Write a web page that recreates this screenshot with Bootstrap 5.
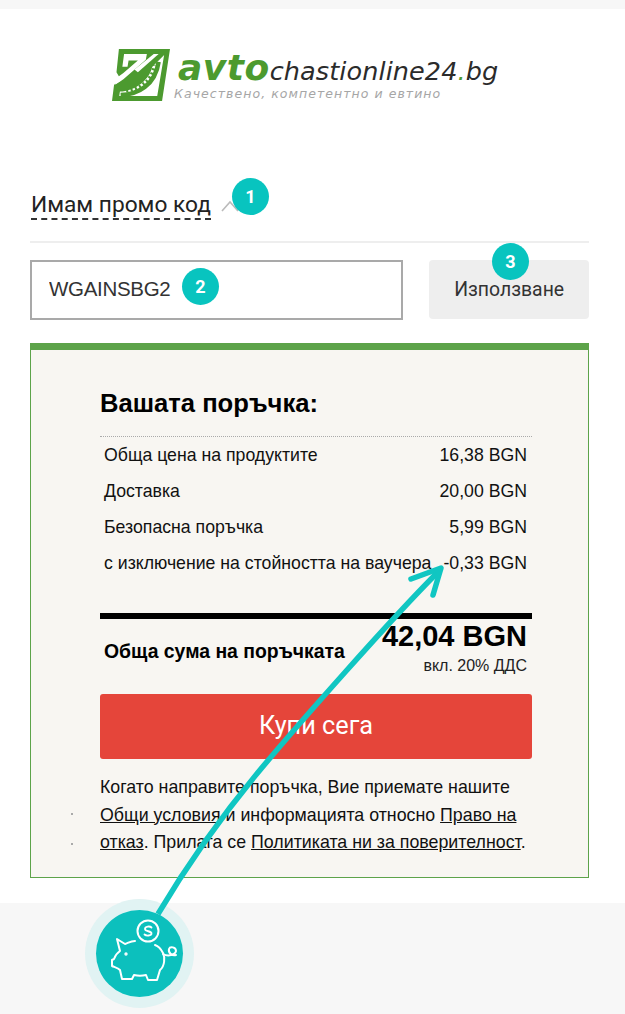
<!DOCTYPE html>
<html lang="bg">
<head>
<meta charset="utf-8">
<title>Вашата поръчка</title>
<link href="https://cdn.jsdelivr.net/npm/bootstrap@5.3.0/dist/css/bootstrap.min.css" rel="stylesheet">
<style>
html,body{margin:0;padding:0;background:#fff}
body{width:625px;height:1014px;overflow:hidden;position:relative;font-family:"Liberation Sans",Arial,sans-serif;color:#111}
.top-strip{height:9px;background:#f7f7f7}
.main-area{height:894px;padding:0 36px 0 30px}
.logo-row{height:104px;padding:40px 0 0 82px;gap:8px}
.logo-text{width:340px;padding-top:1px}
.logo-name{font-family:"DejaVu Sans",sans-serif;font-style:italic;line-height:36px;white-space:nowrap}
.logo-avto{font-size:36px;font-weight:700;color:#4c9a2f;letter-spacing:.5px}
.logo-rest{font-size:25.5px;color:#2b2b2b;letter-spacing:.1px}
.logo-dot{font-size:25.5px;color:#4c9a2f}
.logo-tag{font-family:"DejaVu Sans",sans-serif;font-size:12.5px;font-style:italic;color:#a6a6a6;letter-spacing:1.05px;margin-top:-6px;line-height:14px;white-space:nowrap;margin-left:-4px}
.promo-row{height:130px;padding-top:78px;border-bottom:2px solid #eee}
.promo-link{font-family:"Roboto",sans-serif;font-size:22.7px;line-height:27px;color:#222;border-bottom:2px dashed #333;display:inline-block;height:29px;margin-left:1px}
.promo-caret{display:inline-block;margin-left:6px;vertical-align:0}
.code-row{margin-top:17px;gap:26px}
.code-input{width:374px;height:60px;border:2px solid #a9a9a9;border-radius:0;font-size:20.5px;color:#333;padding:0 17px 3px;font-family:"Liberation Sans",sans-serif;box-shadow:none;letter-spacing:-.3px}
.use-btn{width:160px;height:59px;background:#eee;border:0;border-radius:4px;color:#333;font-family:"Roboto",sans-serif;font-size:19.4px;padding:0}
.order-box{margin-top:23px;height:535px;border:1px solid #5da34a;border-top:7px solid #5da34a;background:#f8f6f2;padding:37px 56px 0 69px}
.order-title{font-size:25.6px;font-weight:700;line-height:32px;color:#000;margin:0 0 17px}
.order-lines{border-top:1px dotted #aaa;padding:0 5px 0 4px;height:177px}
.order-line{height:36px;font-size:17.7px;align-items:center;color:#111}
.total-wrap{border-top:6px solid #000;height:81px;padding:0 5px 0 4px}
.total-label{font-size:19.4px;font-weight:700;padding-top:20px;line-height:24px;white-space:nowrap;color:#000}
.total-num{font-size:29px;font-weight:700;line-height:30px;padding-top:2px;text-align:right;white-space:nowrap;color:#000}
.total-vat{font-size:16px;line-height:18px;margin-top:6px;text-align:right;color:#222}
.buy-btn{display:block;width:100%;height:65px;background:#e5453a;border:0;border-radius:3px;color:#fff;font-family:"Roboto",sans-serif;font-size:25.3px;padding:0 0 2px}
.legal{font-size:17.8px;line-height:27.5px;margin:15px -10px 0 0;white-space:nowrap;color:#111}
.legal a{color:#111;text-decoration:underline}
.bottom-band{height:111px;background:#f7f7f7}
.num-badge{position:absolute;width:37px;height:37px;border-radius:50%;background:#08c4bf;color:#fff;font-family:"Roboto",sans-serif;font-weight:700;font-size:18px;line-height:37px;text-align:center}
.badge-one{left:232px;top:178px}
.badge-two{left:182px;top:268px}
.badge-three{left:492px;top:243px}
.arrow-layer{position:absolute;left:0;top:0;pointer-events:none}
.pig-halo{position:absolute;left:85px;top:899px;width:109px;height:109px;border-radius:50%;background:#e1f3f3}
.pig-disc{position:absolute;left:96px;top:910px;width:87px;height:87px;border-radius:50%;background:#0cc0bd}
.stray-dot{position:absolute;left:71px;width:2px;height:2px;background:#aaa}
</style>
</head>
<body>
<div class="top-strip"></div>
<div class="main-area">
  <div class="logo-row d-flex align-items-start">
    <svg width="58" height="52" viewBox="25 25 168 150" class="flex-shrink-0">
      <path fill="#4c9a2f" d="M45 25H193L170 175H25L31 128 52 116 38 92Z"/>
      <path fill="#fff" d="M60 39H126L123 56 58 112 34 128 44 104 58 94 100 58H73L70 76H55Z"/>
      <path fill="#fff" d="M176 42 156 161H46L48 148C90 146 130 120 142 76Z"/>
      <path fill="#fff" d="M146 39H160L100 92 90 84Z"/>
      <path fill="none" stroke="#4c9a2f" stroke-width="13" d="M50 158C100 156 150 130 160 62"/>
      <path fill="none" stroke="#4c9a2f" stroke-width="10" stroke-dasharray="6 7" d="M66 146C105 142 140 118 148 72"/>
    </svg>
    <div class="logo-text">
      <div class="logo-name"><span class="logo-avto">avto</span><span class="logo-rest">chastionline24</span><span class="logo-dot">.</span><span class="logo-rest">bg</span></div>
      <div class="logo-tag">Качествено, компетентно и евтино</div>
    </div>
  </div>
  <div class="promo-row">
    <span class="promo-link">Имам промо код</span>
    <svg class="promo-caret" width="18" height="12" viewBox="0 0 18 12"><path d="M1 11 9 2l8 9" fill="none" stroke="#bbb" stroke-width="1.6"/></svg>
  </div>
  <div class="code-row d-flex align-items-start">
    <input class="form-control code-input" type="text" value="WGAINSBG2" aria-label="Промо код">
    <button class="btn use-btn" type="button">Използване</button>
  </div>
  <div class="order-box">
    <h2 class="order-title">Вашата поръчка:</h2>
    <div class="order-lines">
      <div class="order-line d-flex justify-content-between"><span>Обща цена на продуктите</span><span>16,38 BGN</span></div>
      <div class="order-line d-flex justify-content-between"><span>Доставка</span><span>20,00 BGN</span></div>
      <div class="order-line d-flex justify-content-between"><span>Безопасна поръчка</span><span>5,99 BGN</span></div>
      <div class="order-line d-flex justify-content-between"><span>с изключение на стойността на ваучера</span><span>-0,33 BGN</span></div>
    </div>
    <div class="total-wrap d-flex justify-content-between">
      <div class="total-label">Обща сума на поръчката</div>
      <div>
        <div class="total-num">42,04 BGN</div>
        <div class="total-vat">вкл. 20% ДДС</div>
      </div>
    </div>
    <button class="btn buy-btn" type="button">Купи сега</button>
    <p class="legal">Когато направите поръчка, Вие приемате нашите<br><a href="#">Общи условия</a> и информацията относно <a href="#">Право на<br>отказ</a>. Прилага се <a href="#">Политиката ни за поверителност</a>.</p>
  </div>
</div>
<div class="bottom-band"></div>

<span class="stray-dot" style="top:813px"></span>
<span class="stray-dot" style="top:843px"></span>
<div class="pig-halo"></div>
<svg class="arrow-layer" width="625" height="1014" viewBox="0 0 625 1014">
  <path d="M158 914C190 860 225 812 260 770S390 620 438 572" fill="none" stroke="#10c6c2" stroke-width="5.5"/>
  <path d="M411 579 441 568 433 595" fill="none" stroke="#10c6c2" stroke-width="5.5" stroke-linecap="round" stroke-linejoin="round"/>
</svg>
<div class="pig-disc"></div>
<svg class="arrow-layer" width="625" height="1014" viewBox="0 0 625 1014">
  <g fill="none" stroke="#fff" stroke-width="2" stroke-linecap="round" stroke-linejoin="round">
    <circle cx="148" cy="931" r="10.5"/>
    <path d="M151.500 927.500C150 926 145 926 145 929 145 932 151.500 930.500 151.500 933.500 151.500 936 146 936 144.500 934.500" stroke-width="1.8"/>
    <path d="M135 941C131 941 128 943 125 944L117 939 120 951C117 953 115 956 114 959L112 960 112 966C114 967 118 968 120 970L122 979H132L134 975C138 976 142 976 146 975L148 980H157L160 970C165 966 165 957 163 953 161 949 158 946 155 945"/>
    <path d="M163 954C168 957 175 955 176 951 176 947 170 946 169 949 168 953 172 956 176 955"/>
    <circle cx="126" cy="954" r=".7"/>
  </g>
</svg>
<div class="num-badge badge-one">1</div>
<div class="num-badge badge-two">2</div>
<div class="num-badge badge-three">3</div>
</body>
</html>
